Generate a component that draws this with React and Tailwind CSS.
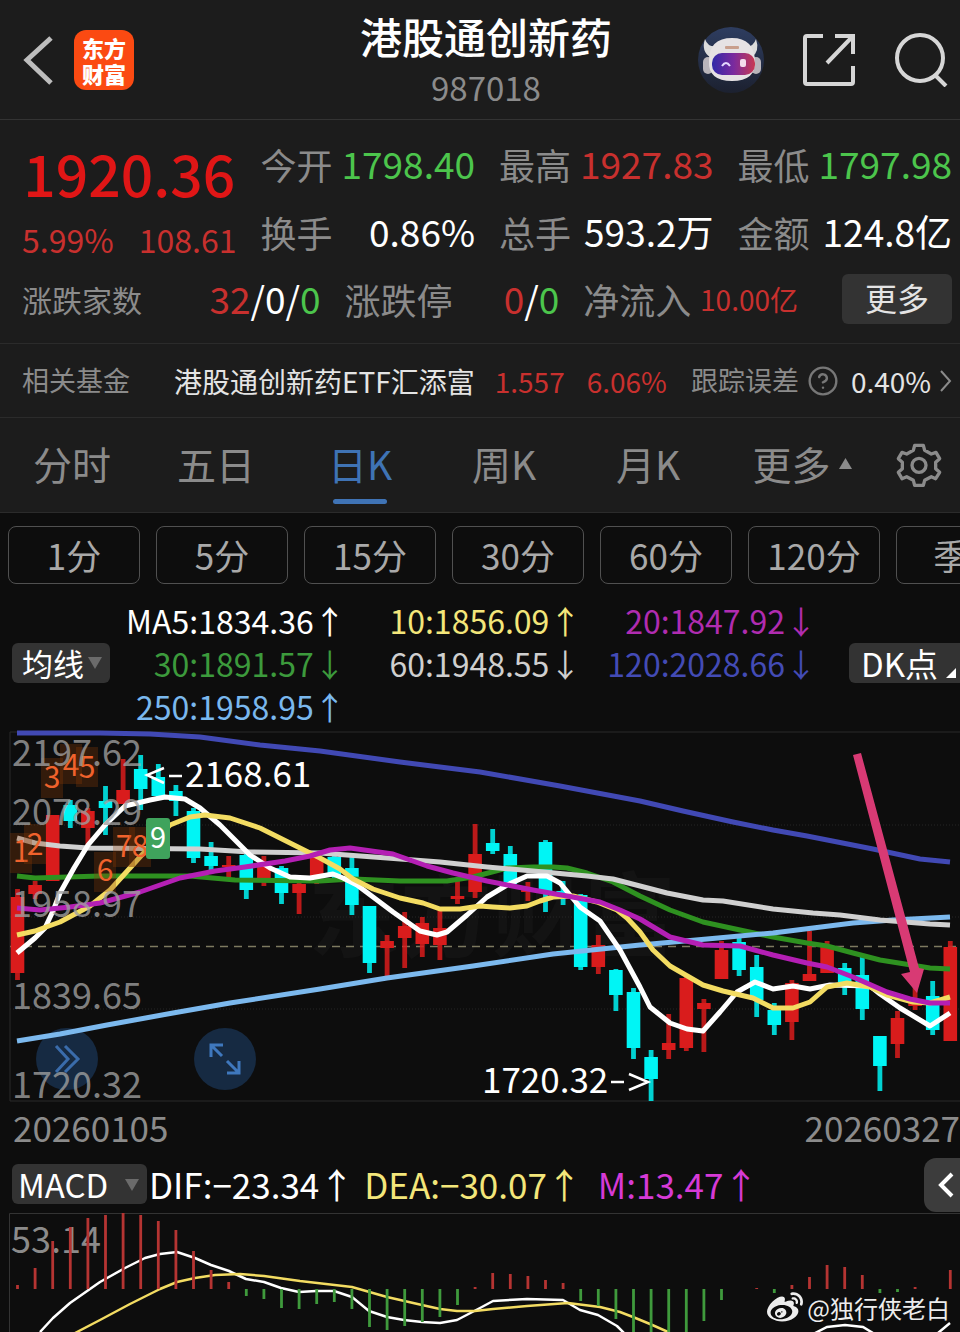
import React from 'react'
import { FaWeibo } from 'react-icons/fa'
import { CircleHelp } from 'lucide-react'

const RED = '#d91c1c'
const CYAN = '#00f5f5'
const STEP = 17.6
const START = 17.5

// [direction, high, body top, body bottom, low]
const candles = [
  ['r', 889, 897, 973, 980], ['r', 881, 885, 894, 899], ['r', 815, 815, 881, 881],
  ['c', 800, 805, 821, 828], ['r', 808, 811, 828, 845], ['c', 786, 801, 808, 835],
  ['r', 759, 790, 804, 804], ['c', 755, 769, 789, 810], ['c', 764, 777, 796, 797],
  ['c', 785, 791, 801, 816], ['c', 808, 811, 858, 863], ['c', 842, 856, 866, 871],
  ['r', 856, 865, 867, 878], ['c', 854, 855, 890, 899], ['r', 856, 865, 882, 886],
  ['c', 866, 868, 893, 904], ['r', 880, 884, 893, 914], ['r', 855, 857, 878, 884],
  ['c', 853, 857, 877, 881], ['c', 856, 868, 905, 915], ['c', 906, 906, 963, 973],
  ['r', 935, 941, 948, 976], ['r', 912, 926, 938, 968], ['r', 917, 923, 944, 957],
  ['r', 909, 928, 945, 960], ['r', 880, 896, 899, 904], ['r', 824, 854, 892, 898],
  ['c', 829, 843, 851, 854], ['c', 846, 854, 884, 884], ['r', 882, 888, 892, 901],
  ['c', 840, 842, 893, 912], ['c', 881, 891, 898, 905], ['c', 894, 895, 967, 970],
  ['r', 935, 945, 967, 974], ['c', 969, 970, 995, 1011], ['c', 988, 992, 1048, 1059],
  ['c', 1050, 1057, 1079, 1101], ['r', 1014, 1043, 1050, 1059], ['r', 977, 978, 1048, 1051],
  ['r', 999, 1003, 1009, 1052], ['r', 941, 950, 979, 979], ['c', 936, 942, 970, 976],
  ['c', 955, 967, 1000, 1017], ['c', 1003, 1010, 1025, 1035], ['r', 980, 983, 1022, 1040],
  ['r', 931, 974, 981, 981], ['r', 941, 946, 973, 973], ['c', 963, 968, 982, 995],
  ['c', 957, 975, 1009, 1020], ['c', 1036, 1036, 1066, 1091], ['r', 1011, 1018, 1044, 1058],
  ['r', 985, 1002, 1006, 1010], ['c', 981, 996, 1030, 1035], ['r', 941, 947, 1041, 1041],
]

const averages = [
  {
    color: '#4149b4',
    points: '17,733 100,733 150,734 200,737 260,745 320,751 400,762 480,772 560,786 640,801 683,811 733,822 773,830 807,836 873,849 920,859 950,862',
  },
  {
    color: '#2e9120',
    points: '17,876 35,878 100,876 190,876 235,880 320,881 353,879 400,881 447,881 473,877 507,868 533,867 553,867 567,868 587,873 613,882 640,896 670,910 703,922 740,930 773,937 807,943 827,946 853,953 880,960 930,968 950,969',
  },
  {
    color: '#7cb9ee',
    points: '17,1041 60,1034 107,1025 173,1013 230,1003 320,989 387,978 473,966 553,954 640,945 707,939 773,933 853,923 893,920 950,917',
  },
  {
    color: '#d0d0d0',
    points: '17,838 35,843 60,846 88,848 200,849 250,852 320,853 387,858 440,862 487,867 533,871 587,876 613,879 640,886 667,893 703,900 723,901 773,909 813,913 840,915 880,920 930,924 950,925',
  },
  {
    color: '#ffffff',
    points: '17,953 35,938 45,928 53,911 60,893 74,868 88,845 105,825 125,806 150,800 165,797 185,799 200,808 220,825 250,855 270,868 290,877 310,878 333,874 343,878 357,885 373,897 393,912 420,931 437,935 447,932 467,915 487,897 507,885 527,876 547,876 560,883 580,907 600,921 620,950 640,987 650,1007 670,1023 687,1029 703,1031 720,1012 737,992 755,982 773,989 793,986 810,989 830,985 870,986 880,994 900,1008 930,1026 950,1013',
  },
  {
    color: '#f3dc62',
    points: '17,935 35,931 60,922 90,906 110,890 130,868 150,846 170,825 190,817 205,815 230,818 260,828 290,843 320,858 340,869 353,879 373,889 400,898 423,903 440,909 460,909 480,906 493,907 510,908 527,906 540,901 553,897 573,896 597,902 617,910 627,918 640,932 653,950 670,966 703,985 723,991 753,998 773,1008 793,1008 810,1002 827,987 847,983 870,987 887,995 913,1002 930,1003 950,997',
  },
  {
    color: '#b41fb4',
    points: '17,908 40,910 70,907 100,903 140,892 180,878 215,871 245,867 285,861 310,856 330,850 350,848 393,854 427,866 453,873 487,881 533,890 567,896 600,902 620,910 640,919 670,937 703,945 740,946 773,955 807,963 827,967 853,977 887,992 910,999 930,1003 950,1003',
  },
]

const priceLabels = [
  ['2197.62', 766],
  ['2078.29', 825],
  ['1958.97', 917],
  ['1839.65', 1009],
  ['1720.32', 1098],
]

// TD sequence marks: [text, box x, box y, text baseline]
const marks = [
  ['1', 10, 833, 862], ['2', 24, 824, 855], ['3', 41, 758, 788], ['4', 60, 744, 776],
  ['5', 76, 747, 778], ['6', 94, 852, 881], ['7', 113, 827, 857], ['8', 129, 827, 857],
]

const maRows = [
  [['MA5:1834.36↑', 'text-white'], ['10:1856.09↑', 'text-[#f3e67a]'], ['20:1847.92↓', 'text-[#b02cb0]']],
  [['30:1891.57↓', 'text-[#3c9a3c]'], ['60:1948.55↓', 'text-[#cfcfcf]'], ['120:2028.66↓', 'text-[#434bb5]']],
  [['250:1958.95↑', 'text-[#7ab8ee]']],
]

// bar end for each day, the zero line is at 1289
const macdBars = [
  1285, 1268, 1241, 1227, 1218, 1215, 1213, 1215, 1221, 1230, 1251, 1270, 1282, 1296,
  1299, 1308, 1309, 1304, 1302, 1309, 1327, 1330, 1326, 1322, 1317, 1305, 1287, 1273,
  1274, 1276, 1280, 1283, 1301, 1306, 1319, 1334, 1334, 1334, 1334, 1321, 1300, 1289,
  1288, 1293, 1285, 1277, 1265, 1267, 1275, 1293, 1292, 1287, 1289, 1270,
]

function Header() {
  return (
    <header className="grid grid-cols-[1fr_auto_1fr] h-[120px] border-b border-[#333333]">
      <div className="flex items-center pl-[18px] gap-5">
        <button aria-label="返回">
          <svg width="36" height="52" viewBox="0 0 36 52" fill="none" stroke="#bdbdbd" strokeWidth="5">
            <path d="M33 4 L9 26 L33 49" />
          </svg>
        </button>
        <div className="size-[60px] rounded-xl bg-[#fb4a12] text-white font-black text-[22px] leading-[26px] flex flex-col items-center justify-center">
          <span>东方</span>
          <span>财富</span>
        </div>
      </div>
      <div className="ml-3 text-center pt-[6px]">
        <h1 className="text-[42px] leading-[60px] font-medium text-white">港股通创新药</h1>
        <p className="text-[33px] leading-[42px] text-[#8b8b8b]">987018</p>
      </div>
      <div className="flex items-center justify-end gap-[38px] pr-3">
        <button aria-label="助手">
          <svg width="66" height="66" viewBox="0 0 66 66">
            <defs>
              <linearGradient id="visor" x1="0" x2="1" y1="0" y2="0">
                <stop offset="0" stopColor="#3129a8" />
                <stop offset="0.5" stopColor="#7a2a9e" />
                <stop offset="1" stopColor="#c83a52" />
              </linearGradient>
              <linearGradient id="disc" x1="0" x2="0" y1="0" y2="1">
                <stop offset="0" stopColor="#2e3d60" />
                <stop offset="1" stopColor="#1c2130" />
              </linearGradient>
            </defs>
            <circle cx="33" cy="33" r="33" fill="url(#disc)" />
            <path d="M7 12 Q3 24 12 30 L20 19 Q10 21 7 12 Z M58 12 Q62 24 54 30 L46 19 Q55 21 58 12 Z" fill="#dcdcdc" />
            <rect x="5" y="30" width="10" height="17" rx="5" fill="#b9b5bb" />
            <rect x="53" y="30" width="10" height="17" rx="5" fill="#b9b5bb" />
            <path d="M11 34 Q11 11 34 11 Q56 11 57 34 Q58 54 34 54 Q10 54 11 34 Z" fill="#e6e2e4" />
            <rect x="27" y="19" width="14" height="3" rx="1" fill="#c99f8d" />
            <rect x="14" y="26" width="43" height="22" rx="10" fill="url(#visor)" />
            <path d="M24 39 Q28 33 32 39" fill="none" stroke="#e5d8ff" strokeWidth="2" />
            <rect x="42" y="32" width="6" height="8" rx="2" fill="#f4dcec" />
          </svg>
        </button>
        <button aria-label="分享">
          <svg width="54" height="54" viewBox="0 0 54 54" fill="none" stroke="#d6d6d6" strokeWidth="4">
            <path d="M21 3 H5 Q3 3 3 5 V49 Q3 51 5 51 H49 Q51 51 51 49 V33 M33 3 H51 V21 M51 3 L25 30" />
          </svg>
        </button>
        <button aria-label="搜索">
          <svg width="54" height="54" viewBox="0 0 54 54" fill="none" stroke="#d6d6d6" strokeWidth="4">
            <circle cx="26" cy="25" r="23" />
            <path d="M41 42 L52 53" />
          </svg>
        </button>
      </div>
    </header>
  )
}

function Stat({ label, value, color }) {
  return (
    <div className="flex items-center justify-between">
      <dt className="text-[36px] text-[#8b8b8b]">{label}</dt>
      <dd className={`text-[37px] ${color}`}>{value}</dd>
    </div>
  )
}

function Quote() {
  return (
    <section className="pt-[10px] pb-[11px] pl-[22px] pr-2 whitespace-nowrap">
      <div className="grid grid-cols-4 gap-x-6">
        <div className="h-[136px] pt-[6px]">
          <p className="text-[57px] leading-[72px] font-medium text-[#e01616] text-center">1920.36</p>
          <p className="flex justify-between text-[32px] leading-[62px] text-[#c8302e]">
            <span>5.99%</span>
            <span>108.61</span>
          </p>
        </div>
        <dl className="col-span-3 grid grid-cols-3 grid-rows-2 gap-x-6 h-[136px]">
          <Stat label="今开" value="1798.40" color="text-[#4cc54c]" />
          <Stat label="最高" value="1927.83" color="text-[#c8302e]" />
          <Stat label="最低" value="1797.98" color="text-[#4cc54c]" />
          <Stat label="换手" value="0.86%" color="text-white" />
          <Stat label="总手" value="593.2万" color="text-white" />
          <Stat label="金额" value="124.8亿" color="text-white" />
        </dl>
      </div>
      <div className="flex items-center h-[66px]">
        <dl className="flex-1 grid grid-cols-[299fr_215fr_215fr] gap-x-6 mr-11">
          <div className="flex items-center justify-between">
            <dt className="text-[30px] text-[#8b8b8b]">涨跌家数</dt>
            <dd className="text-[37px] text-white">
              <span className="text-[#c8302e]">32</span>/0/<span className="text-[#4cc54c]">0</span>
            </dd>
          </div>
          <div className="flex items-center justify-between">
            <dt className="text-[36px] text-[#8b8b8b]">涨跌停</dt>
            <dd className="text-[37px] text-white">
              <span className="text-[#c8302e]">0</span>/<span className="text-[#4cc54c]">0</span>
            </dd>
          </div>
          <div className="flex items-center justify-between">
            <dt className="text-[36px] text-[#8b8b8b]">净流入</dt>
            <dd className="text-[28px] text-[#c8302e]">10.00亿</dd>
          </div>
        </dl>
        <button className="w-[110px] h-[50px] rounded-md bg-[#333333] text-[32px] leading-[46px] pb-1 text-[#e4e4e4]">更多</button>
      </div>
    </section>
  )
}

function RelatedFund() {
  return (
    <a href="#fund" className="flex items-center h-[75px] pl-[22px] pr-2 border-y border-[#2b2b2b] text-[27px] whitespace-nowrap">
      <span className="text-[#8b8b8b]">相关基金</span>
      <span className="ml-11 text-[28px] text-[#e4e4e4]">港股通创新药ETF汇添富</span>
      <span className="ml-5 text-[28px] text-[#c8302e]">1.557</span>
      <span className="ml-[22px] text-[28px] text-[#c8302e]">6.06%</span>
      <span className="ml-6 text-[#8b8b8b]">跟踪误差</span>
      <CircleHelp className="ml-2 size-8 shrink-0 text-[#777777]" strokeWidth={1.8} />
      <span className="ml-3 text-[28px] text-[#e4e4e4]">0.40%</span>
      <svg className="ml-auto" width="12" height="24" viewBox="0 0 12 24" fill="none" stroke="#8b8b8b" strokeWidth="2">
        <path d="M1 2 L10 12 L1 22" />
      </svg>
    </a>
  )
}

function Tabs() {
  const tabs = ['分时', '五日', '日K', '周K', '月K']
  return (
    <div className="flex h-[95px] border-b border-[#2b2b2b]">
      <nav className="flex-1 grid grid-cols-6 text-[39px] text-[#8b8b8b]">
        {tabs.map((tab) => (
          <button key={tab} className={tab === '日K' ? 'relative pb-1 text-[#3f73b5]' : 'relative pb-1'}>
            {tab}
            {tab === '日K' && <span className="absolute bottom-2 left-1/2 -translate-x-1/2 w-[54px] h-[5px] rounded-full bg-[#3f73b5]" />}
          </button>
        ))}
        <button className="flex items-center justify-center gap-2 pl-5 pb-1">
          更多
          <svg width="13" height="11" viewBox="0 0 13 11" fill="#8b8b8b">
            <path d="M6.5 0 L13 11 H0 Z" />
          </svg>
        </button>
      </nav>
      <button className="w-24 pl-[26px]" aria-label="设置">
        <svg width="58" height="58" viewBox="0 0 174 174" fill="none" stroke="#8b8b8b" strokeWidth="10" strokeLinejoin="round">
          <path d="M74 28 H100 L104 43 L124 54 L138 49 L149 68 L137 79 V98 L149 109 L137 128 L124 122 L104 133 L100 148 H74 L70 133 L50 122 L36 128 L25 109 L37 98 V79 L25 68 L36 49 L50 54 L70 43 Z" />
          <circle cx="87" cy="88" r="21" />
        </svg>
      </button>
    </div>
  )
}

function Periods() {
  const periods = ['1分', '5分', '15分', '30分', '60分', '120分', '季K']
  return (
    <div className="flex gap-4 pl-2 pt-[13px] overflow-hidden">
      {periods.map((p) => (
        <button key={p} className="shrink-0 w-[132px] h-[58px] rounded-lg border border-[#505050] text-[35px] leading-[54px] text-[#a9a9a9]">
          {p}
        </button>
      ))}
    </div>
  )
}

function Averages() {
  return (
    <section className="flex items-center h-[146px] pt-3 pl-3">
      <label className="relative block w-[98px]">
        <span className="sr-only">主图指标</span>
        <select className="block appearance-none w-full h-10 rounded-md bg-[#333333] pl-[10px] text-[31px] leading-[40px] text-white">
          <option>均线</option>
        </select>
        <svg className="absolute right-2 top-[14px] pointer-events-none" width="14" height="12" viewBox="0 0 14 12" fill="#6b6b6b">
          <path d="M0 0 H14 L7 12 Z" />
        </svg>
      </label>
      <div className="flex-1 mr-8 text-[32px] leading-[43px] whitespace-nowrap">
        {maRows.map((row, i) => (
          <div key={i} className="grid grid-cols-3">
            {row.map(([text, color]) => (
              <span key={text} className={`text-right ${color}`}>{text}</span>
            ))}
          </div>
        ))}
      </div>
      <button className="flex items-center justify-between w-[111px] h-10 rounded-l-md bg-[#333333] pl-3 pr-1 text-[33px] leading-[36px] text-white">
        DK点
        <svg className="self-end mb-[5px]" width="10" height="10" viewBox="0 0 10 10" fill="#ffffff">
          <path d="M10 0 V10 H0 Z" />
        </svg>
      </button>
    </section>
  )
}

function KLine() {
  return (
    <section className="relative">
      <button aria-label="展开" className="absolute left-9 bottom-[15px] size-[62px] rounded-full bg-[#162a42] flex items-center justify-center">
        <svg width="30" height="30" viewBox="0 0 30 30" fill="none" stroke="#3a6cab" strokeWidth="3">
          <path d="M4 2 L16 15 L4 28 M13 2 L26 15 L13 28" />
        </svg>
      </button>
      <button aria-label="全屏" className="absolute left-[194px] bottom-[15px] size-[62px] rounded-full bg-[#162a42] flex items-center justify-center">
        <svg width="32" height="32" viewBox="0 0 32 32" fill="none" stroke="#3f78bd" strokeWidth="3">
          <path d="M2 14 V2 H14 M2 2 L13 13 M30 18 V30 H18 M30 30 L18 18" />
        </svg>
      </button>
      <svg className="relative w-full h-auto overflow-visible pointer-events-none" viewBox="0 730 960 375">
        <text x="308" y="950" fontSize="92" fontWeight="700" fill="#131313">东方财富</text>
        <path d="M960 732 H10 V1101 H960" fill="none" stroke="#2b2b2b" />
        <path d="M10 825 H960 M10 917 H960 M10 1009 H960" stroke="#262626" strokeDasharray="1 2" />
        <path d="M10 946.5 H960" stroke="#7d7a60" strokeWidth="1.5" strokeDasharray="8 6" />

        {candles.map(([dir, high, top, bottom, low], i) => {
          const x = START + i * STEP
          const color = dir === 'r' ? RED : CYAN
          return (
            <g key={i} fill={color}>
              <rect x={x - 2.4} y={high} width="4.8" height={low - high} fillOpacity="0.85" />
              <rect x={x - 6.8} y={top} width="13.6" height={bottom - top} />
            </g>
          )
        })}

        {averages.map((line) => (
          <polyline key={line.color} points={line.points} fill="none" stroke={line.color} strokeWidth="5" strokeLinejoin="round" />
        ))}

        {marks.map(([text, x, y, baseline]) => (
          <g key={text}>
            <rect x={x} y={y} width="22" height="40" fill="#8a3a08" fillOpacity="0.3" />
            <text x={x + 11} y={baseline} fontSize="30" textAnchor="middle" fill="#f0622c">{text}</text>
          </g>
        ))}
        <rect x="146" y="818" width="24" height="41" rx="3" fill="#3fa35c" />
        <text x="158" y="848" fontSize="29" textAnchor="middle" fill="#ffffff">9</text>

        {priceLabels.map(([text, y]) => (
          <text key={text} x="12" y={y} fontSize="36" fill="#a0a0a0" fillOpacity="0.8">{text}</text>
        ))}

        <path d="M164 768 L147 775 L164 783 M169 776 H182" fill="none" stroke="#ffffff" strokeWidth="2.5" />
        <text x="185" y="787" fontSize="35" fill="#ffffff">2168.61</text>
        <text x="482" y="1093" fontSize="35" fill="#ffffff">1720.32</text>
        <path d="M611 1082 H624 M629 1074 L648 1082 L629 1090" fill="none" stroke="#ffffff" strokeWidth="2.5" />

        <path d="M853 755 L861 753 L919 968 L924 969 L917 993 L901 974 L910 972 Z" fill="#d83a74" />
      </svg>
    </section>
  )
}

function Macd() {
  return (
    <section>
      <div className="flex items-center justify-between h-[60px]">
        <div className="flex items-center pt-1 pl-3 whitespace-nowrap text-[35px] leading-[48px]">
          <label className="relative block w-[135px] mr-[2px]">
            <span className="sr-only">副图指标</span>
            <select className="block appearance-none w-full h-10 rounded-md bg-[#333333] pl-[6px] text-[33px] leading-[40px] text-white">
              <option>MACD</option>
            </select>
            <svg className="absolute right-2 top-[15px] pointer-events-none" width="14" height="12" viewBox="0 0 14 12" fill="#6b6b6b">
              <path d="M0 0 H14 L7 12 Z" />
            </svg>
          </label>
          <span className="text-white">DIF:−23.34↑</span>
          <span className="ml-[10px] text-[#f3e67a]">DEA:−30.07↑</span>
          <span className="ml-4 text-[#d63ad6]">M:13.47↑</span>
        </div>
        <button aria-label="收起" className="self-end w-9 h-[54px] rounded-l-xl bg-[#3c3c3c] flex items-center justify-center">
          <svg className="ml-2" width="16" height="26" viewBox="0 0 16 26" fill="none" stroke="#ffffff" strokeWidth="4">
            <path d="M14 2 L3 13 L14 24" />
          </svg>
        </button>
      </div>
      <svg className="w-full h-auto" viewBox="0 1212 960 120">
        <path d="M960 1213.5 H9.5 V1332" fill="none" stroke="#333333" />
        <text x="11" y="1253" fontSize="36" fill="#8b8b8b">53.14</text>
        <polyline
          points="40,1332 53,1318 70,1303 100,1282 125,1268 145,1258 160,1254 177,1252 195,1258 211,1265 229,1271 246,1279 264,1282 281,1288 299,1292 316,1291 334,1291 352,1297 369,1311 387,1317 404,1320 422,1322 440,1323 457,1320 480,1308 493,1301 527,1299 563,1300 580,1310 598,1315 617,1326 624,1333"
          fill="none" stroke="#ffffff" strokeWidth="2.5" strokeLinejoin="round"
        />
        <path d="M815 1333 L827 1327 L845 1325 L863 1327 L873 1333 M938 1333 L950 1323" fill="none" stroke="#ffffff" strokeWidth="2.5" />
        <polyline
          points="75,1333 100,1320 130,1304 160,1289 177,1282 195,1278 215,1275 240,1274 264,1276 300,1281 352,1287 387,1297 422,1305 440,1309 457,1311 475,1311 493,1309 527,1306 568,1303 600,1307 620,1312 633,1317 650,1324 668,1332"
          fill="none" stroke="#f3dc62" strokeWidth="2.5" strokeLinejoin="round"
        />
        {macdBars.map((end, i) => (
          <rect
            key={i}
            x={START + i * STEP - 1.4}
            y={Math.min(end, 1289)}
            width="2.8"
            height={Math.abs(end - 1289)}
            fill={end < 1289 ? '#b53432' : '#3f9a3c'}
          />
        ))}
      </svg>
    </section>
  )
}

function App() {
  return (
    <div className="relative min-h-screen overflow-hidden bg-[#0d0d0d] font-['Noto_Sans_CJK_SC',sans-serif]">
      <div className="bg-[#1c1c1c]">
        <Header />
        <Quote />
        <RelatedFund />
        <Tabs />
      </div>
      <Periods />
      <Averages />
      <KLine />
      <div className="flex justify-between h-[47px] pl-[13px] text-[35px] leading-[43px] text-[#8b8b8b]">
        <span>20260105</span>
        <span>20260327</span>
      </div>
      <Macd />
      <div className="absolute right-[10px] bottom-[6px] flex items-center gap-1 text-[24px] leading-[30px] text-[#ededed]">
        <FaWeibo className="size-9" />
        @独行侠老白
      </div>
    </div>
  )
}

export default App
